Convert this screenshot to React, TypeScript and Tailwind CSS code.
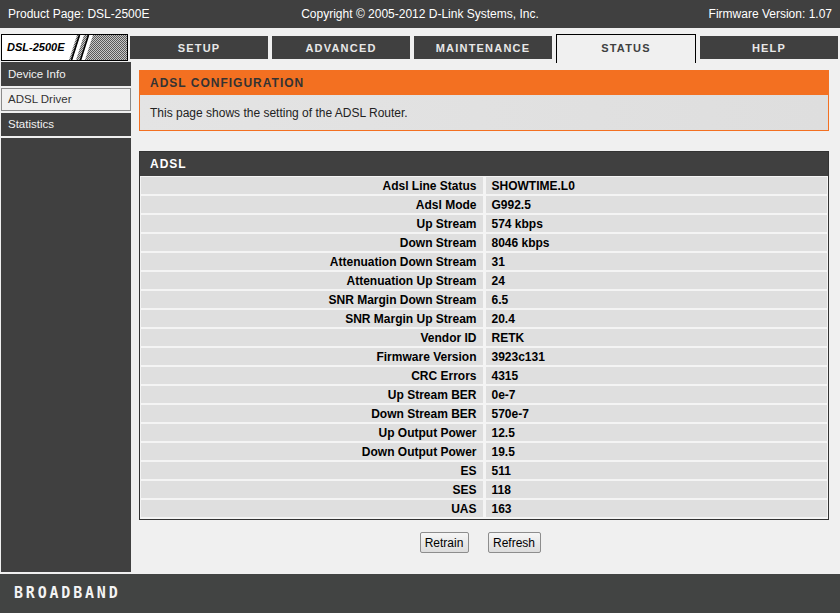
const tabs = ['SETUP', 'ADVANCED', 'MAINTENANCE', 'STATUS', 'HELP'];

const menu = ['Device Info', 'ADSL Driver', 'Statistics'];

const rows: [string, string][] = [
  ['Adsl Line Status', 'SHOWTIME.L0'],
  ['Adsl Mode', 'G992.5'],
  ['Up Stream', '574 kbps'],
  ['Down Stream', '8046 kbps'],
  ['Attenuation Down Stream', '31'],
  ['Attenuation Up Stream', '24'],
  ['SNR Margin Down Stream', '6.5'],
  ['SNR Margin Up Stream', '20.4'],
  ['Vendor ID', 'RETK'],
  ['Firmware Version', '3923c131'],
  ['CRC Errors', '4315'],
  ['Up Stream BER', '0e-7'],
  ['Down Stream BER', '570e-7'],
  ['Up Output Power', '12.5'],
  ['Down Output Power', '19.5'],
  ['ES', '511'],
  ['SES', '118'],
  ['UAS', '163'],
];

function Logo() {
  return (
    <div className="mt-[6px] ml-[1px] flex h-[27px] w-[127px] items-center overflow-hidden border border-black bg-white">
      <span className="pl-[5px] text-[11px] font-bold italic text-black">DSL-2500E</span>
      <svg width="62" height="25" viewBox="0 0 62 25" className="ml-auto shrink-0">
        <defs>
          <pattern id="dither" width="2" height="2" patternUnits="userSpaceOnUse">
            <rect width="2" height="2" fill="#c8c8c8" />
            <rect width="1" height="1" fill="#5a5a5a" />
            <rect x="1" y="1" width="1" height="1" fill="#5a5a5a" />
          </pattern>
        </defs>
        <polygon points="12,0 62,0 62,25 4,25" fill="url(#dither)" />
        <polygon points="15,0 19,0 11,25 7,25" fill="#fff" />
        <line x1="14.5" y1="0" x2="6.5" y2="25" stroke="#000" strokeWidth="1.6" />
        <polygon points="24,0 28,0 20,25 16,25" fill="#fff" />
        <line x1="23.5" y1="0" x2="15.5" y2="25" stroke="#000" strokeWidth="1.6" />
      </svg>
    </div>
  );
}

export default function App() {
  return (
    <div className="flex h-[613px] w-[840px] flex-col overflow-hidden bg-[#f0f0f0] font-['Liberation_Sans',Arial,sans-serif]">
      {/* Top bar */}
      <div className="grid h-[28px] shrink-0 grid-cols-[1fr_auto_1fr] items-center bg-[#404040] px-[8px] text-[12px] text-white">
        <span>Product Page: DSL-2500E</span>
        <span>Copyright © 2005-2012 D-Link Systems, Inc.</span>
        <span className="text-right">Firmware Version: 1.07</span>
      </div>

      {/* Logo + tabs */}
      <div className="flex h-[34px] shrink-0">
        <Logo />
        <div className="ml-[2px] flex gap-[4px]">
          {tabs.map((t) =>
            t === 'STATUS' ? (
              <div
                key={t}
                className="relative z-10 mt-[6px] flex h-[29px] w-[140px] items-center justify-center border-x border-t border-black bg-[#f0f0f0] pb-[1px] text-[11px] font-bold tracking-[1.2px] text-[#404040]"
              >
                {t}
              </div>
            ) : (
              <div
                key={t}
                className="mt-[8px] flex h-[23px] w-[138px] items-center justify-center bg-[#404040] pt-[1px] text-[11px] font-bold tracking-[1.2px] text-[#e8e8e8]"
              >
                {t}
              </div>
            )
          )}
        </div>
      </div>

      {/* Body */}
      <div className="flex min-h-0 flex-1">
        {/* Sidebar */}
        <div className="ml-[1px] flex w-[130px] shrink-0 flex-col gap-[2px]">
          {menu.map((m, i) =>
            m === 'ADSL Driver' ? (
              <div
                key={m}
                className="flex h-[23px] items-center border border-[#8a8a8a] bg-[#f0f0f0] pl-[6px] text-[11.5px] text-[#333]"
              >
                {m}
              </div>
            ) : (
              <div
                key={m}
                className={`flex items-center bg-[#404040] pl-[7px] pt-[1px] text-[11.5px] text-[#f2f2f2] ${i === 0 ? 'h-[24px]' : 'h-[23px]'}`}
              >
                {m}
              </div>
            )
          )}
          <div className="flex-1 bg-[#404040]" />
        </div>

        {/* Main */}
        <div className="flex flex-1 flex-col pt-[8px] pl-[8px] pr-[11px]">
          <div className="border border-[#f37021]">
            <div className="flex h-[24px] items-center bg-[#f37021] pl-[10px] text-[12px] font-bold tracking-[1px] text-[#333]">
              ADSL CONFIGURATION
            </div>
            <div className="flex h-[35px] items-center bg-gradient-to-r from-[#e4e4e4] to-[#dedede] pl-[10px] text-[12px] text-[#222]">
              This page shows the setting of the ADSL Router.
            </div>
          </div>

          <div className="mt-[20px] border border-[#333]">
            <div className="flex h-[24px] items-center bg-[#404040] pl-[10px] text-[12px] font-bold tracking-[1px] text-white">
              ADSL
            </div>
            <div className="grid grid-cols-2 gap-x-[3px] gap-y-[2px] bg-[#f4f4f4] px-[1px] pt-[1px] pb-[2px]">
              {rows.map(([k, v]) => (
                <>
                  <div key={k} className="flex h-[17px] items-center justify-end bg-[#dfdfdf] pr-[6px] text-[12px] font-bold text-black">
                    {k}
                  </div>
                  <div key={k + 'v'} className="flex h-[17px] items-center bg-[#dfdfdf] pl-[6px] text-[12px] font-bold text-black">
                    {v}
                  </div>
                </>
              ))}
            </div>
          </div>

          <div className="mt-[12px] flex justify-center gap-[19px] pr-[8px]">
            <button className="h-[21px] w-[49px] rounded-[2px] border border-[#8d8d8d] bg-gradient-to-b from-[#f6f6f6] to-[#dddddd] text-[12px] text-black">
              Retrain
            </button>
            <button className="h-[21px] w-[53px] rounded-[2px] border border-[#8d8d8d] bg-gradient-to-b from-[#f6f6f6] to-[#dddddd] text-[12px] text-black">
              Refresh
            </button>
          </div>
        </div>
      </div>

      {/* Footer */}
      <div className="mt-[2px] flex h-[39px] shrink-0 items-center bg-[#424443] pl-[14px]">
        <span className="font-['DejaVu_Sans_Mono',monospace] text-[15px] font-bold tracking-[2.8px] text-[#f4f4f4]">
          BROADBAND
        </span>
      </div>
    </div>
  );
}
